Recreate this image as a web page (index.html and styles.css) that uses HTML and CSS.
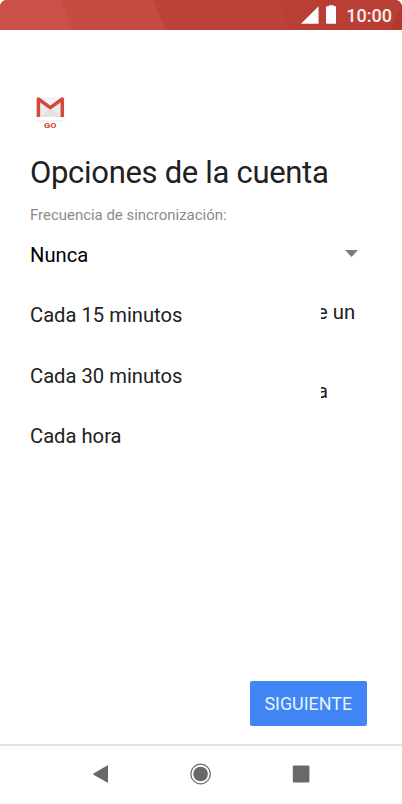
FILE: index.html
```
<!DOCTYPE html>
<html lang="es">
  <head>
    <meta charset="UTF-8" />
    <meta name="viewport" content="width=device-width, initial-scale=1.0" />
    <title>Opciones de la cuenta</title>
    <link rel="stylesheet" href="styles.css">
  </head>
  <body>
    <div class="screen">
      <!-- status bar -->
      <header class="status">
        <svg class="status-bg" viewBox="0 0 402 30" preserveAspectRatio="none">
          <path d="M0 0H402V30H0z" fill="#bd4239" />
          <path d="M0 0H153L166 30H0z" fill="#c54b43" />
          <path d="M0 0H61L72 30H0z" fill="#ca5149" />
          <path d="M278 0H402V30H291z" fill="#b93e35" />
          <path d="M402 5V30H390z" fill="#b1382f" />
        </svg>
        <svg class="signal" viewBox="0 0 18 18"><path d="M18 0V18H0z" fill="#fff" /></svg>
        <svg class="battery" viewBox="0 0 11 19"><path d="M3 0h5v1h2q1 0 1 1v16q0 1-1 1H1q-1 0-1-1V2q0-1 1-1h2z" fill="#fff" /></svg>
        <span class="clock">10:00</span>
      </header>

      <main class="content">
        <svg class="logo" viewBox="0 0 40 38">
          <path d="M7 2.5H34V22H7z" fill="#ececec" />
          <path d="M9 22L20.3 14L32 22z" fill="#e2e2e2" />
          <path d="M9 2H32L20.3 11z" fill="#f5f5f5" />
          <path d="M8.4 22V4L20.3 12.6L32.3 4V22" fill="none" stroke="#d5483f" stroke-width="3.5" stroke-linejoin="round" />
          <path d="M4 25.5H36L31 26.7H9z" fill="#e9e9e9" />
          <text class="logo-text" x="14" y="33" textLength="12.5" lengthAdjust="spacingAndGlyphs">GO</text>
        </svg>
        <h1 class="title">Opciones de la cuenta</h1>
        <p class="label">Frecuencia de sincronización:</p>
        <div class="select">
          <svg class="arrow" viewBox="0 0 13 7"><path d="M0 0H13L6.5 7z" fill="#7b7b7b" /></svg>

          <!-- opened list, lies over the settings below -->
          <ul class="menu">
            <li>Nunca</li>
            <li>Cada 15 minutos</li>
            <li>Cada 30 minutos</li>
            <li>Cada hora</li>
          </ul>
        </div>
        <p class="setting">e un</p>
        <p class="setting setting-last">a</p>
      </main>

      <div class="actions">
        <button class="next" type="button">SIGUIENTE</button>
      </div>

      <!-- navigation bar -->
      <nav class="navbar">
        <svg viewBox="0 0 22 22"><path d="M18 2.8V19.2q0 .8-.8.4L3.5 11.7q-.8-.6 0-1.2L17.2 2.4q.8-.4.8.4z" fill="#696969" /></svg>
        <svg viewBox="0 0 22 22"><circle cx="10.6" cy="11" r="9.8" fill="none" stroke="#696969" stroke-width="1.2" /><circle cx="10.6" cy="11" r="7.3" fill="#696969" /></svg>
        <svg viewBox="0 0 22 22"><rect x="2.8" y="2.6" width="16.6" height="16.8" rx="1" fill="#696969" /></svg>
      </nav>
    </div>
  </body>
</html>
```
FILE: styles.css
```
* {
  margin: 0;
  padding: 0;
  box-sizing: border-box;
  list-style: none;
}
body {
  background-color: #fff;
  font-family: Roboto, sans-serif;
  color: #212121;
}
.screen {
  width: 402px;
  height: 804px;
  display: flex;
  flex-direction: column;
  overflow: hidden;
}

/* status bar */
.status {
  position: relative;
  height: 30px;
  display: flex;
  align-items: flex-start;
  border-radius: 7px 7px 0 0;
  overflow: hidden;
  padding: 5px 10px 0 301px;
}
.status-bg {
  position: absolute;
  inset: 0;
  width: 100%;
  height: 100%;
}
.signal,
.battery,
.clock {
  position: relative;
}
.signal {
  width: 18px;
  height: 18px;
  margin-top: 1px;
}
.battery {
  width: 11px;
  height: 19px;
  margin-left: 7px;
}
.clock {
  margin-left: 10px;
  font-size: 18px;
  line-height: 22px;
  font-weight: 500;
  color: #fbeeed;
  white-space: nowrap;
}

/* content */
.content {
  flex: 1;
  padding: 65px 30px 0;
}
.logo {
  display: block;
  width: 40px;
  height: 38px;
}
.logo-text {
  font-size: 7.5px;
  font-weight: 700;
  fill: #cf3f37;
}
.title {
  margin-top: 20px;
  font-size: 31px;
  line-height: 40px;
  font-weight: 400;
  letter-spacing: -0.31px;
  white-space: nowrap;
}
.label {
  margin-top: 12px;
  font-size: 15px;
  line-height: 20px;
  letter-spacing: -0.03px;
  color: #8b8b8b;
}
.select {
  position: relative;
  height: 60px;
  display: flex;
  justify-content: flex-end;
  padding: 25px 14px 0 0;
}
.arrow {
  width: 13px;
  height: 7px;
}
.menu {
  position: absolute;
  top: 0;
  left: -30px;
  width: 321px;
  padding-left: 30px;
  background-color: #fff;
}
.menu li {
  height: 60.3px;
  font-size: 20.2px;
  line-height: 61px;
}
.menu li:first-child {
  color: #000;
}
.setting {
  padding-left: 287px;
  margin-top: 15px;
  font-size: 20.3px;
  line-height: 24px;
  white-space: nowrap;
}
.setting-last {
  margin-top: 55px;
}

/* buttons */
.actions {
  display: flex;
  justify-content: flex-end;
  padding: 0 35px 18px 0;
}
.next {
  width: 117.5px;
  height: 45px;
  border: none;
  border-radius: 2px;
  background-color: #4285f4;
  color: #e4f5ff;
  font-family: Roboto, sans-serif;
  font-size: 17.9px;
}
.navbar {
  height: 60px;
  display: flex;
  justify-content: center;
  align-items: center;
  gap: 78px;
  padding-bottom: 2px;
  border-top: 2px solid #e1e1e1;
}
.navbar svg {
  width: 22px;
  height: 22px;
}
```
